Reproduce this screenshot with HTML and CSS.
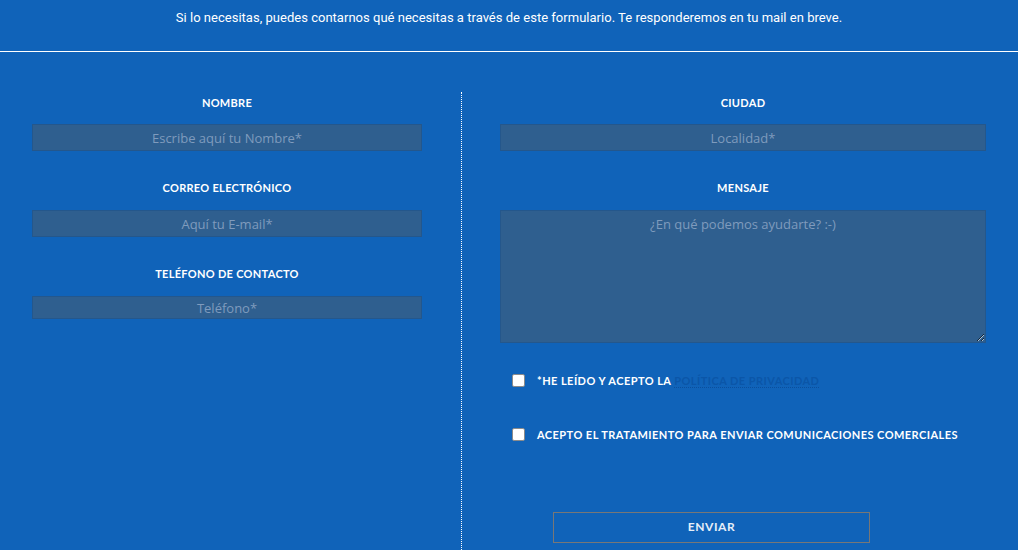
FILE: index.html
```html
<!DOCTYPE html>
<html lang="es">
<head>
<meta charset="utf-8">
<link rel="stylesheet" href="styles.css">
</head>
<body>
<header class="intro">
  <p>Si lo necesitas, puedes contarnos qué necesitas a través de este formulario. Te responderemos en tu mail en breve.</p>
</header>
<form class="form">
  <div class="col col-left">
    <label class="label">NOMBRE</label>
    <input class="field" type="text" placeholder="Escribe aquí tu Nombre*">
    <label class="label">CORREO ELECTRÓNICO</label>
    <input class="field" type="text" placeholder="Aquí tu E-mail*">
    <label class="label">TELÉFONO DE CONTACTO</label>
    <input class="field field-short" type="text" placeholder="Teléfono*">
  </div>
  <div class="col col-right">
    <label class="label">CIUDAD</label>
    <input class="field" type="text" placeholder="Localidad*">
    <label class="label">MENSAJE</label>
    <textarea class="field area" placeholder="¿En qué podemos ayudarte? :-)"></textarea>
    <div class="check check-first">
      <span class="box"></span>
      <span class="check-text">*HE LEÍDO Y ACEPTO LA <a class="link">POLÍTICA DE PRIVACIDAD</a></span>
    </div>
    <div class="check check-second">
      <span class="box"></span>
      <span class="check-text">ACEPTO EL TRATAMIENTO PARA ENVIAR COMUNICACIONES COMERCIALES</span>
    </div>
    <div class="submit-row">
      <button class="submit" type="button">ENVIAR</button>
    </div>
  </div>
</form>
</body>
</html>
```

FILE: styles.css
```css
html, body {
  margin: 0;
  padding: 0;
  background: #1063b9;
  height: 550px;
  overflow: hidden;
}
body {
  font-family: Roboto, "Liberation Sans", sans-serif;
  color: #fff;
}
.intro {
  height: 51px;
  border-bottom: 1px solid #ffffff;
  display: flex;
  justify-content: center;
}
.intro p {
  margin: 9px 0 0;
  font-size: 13px;
  line-height: 17px;
  letter-spacing: 0.02px;
}
.form {
  display: flex;
  padding-top: 40px;
}
.col {
  display: flex;
  flex-direction: column;
  padding-top: 4px;
  height: 454px;
}
.col-left {
  width: 390px;
  padding-left: 32px;
  padding-right: 39px;
  border-right: 1px dotted #ffffff;
}
.col-right {
  width: 486px;
  padding-left: 38px;
}
.label {
  display: block;
  text-align: center;
  font-family: Lato, "Open Sans", sans-serif;
  font-weight: 700;
  font-size: 11px;
  line-height: 14px;
  letter-spacing: 0.3px;
  margin-bottom: 15px;
}
.label:first-child {
  margin-bottom: 14px;
}
.field {
  box-sizing: border-box;
  width: 100%;
  height: 27px;
  margin: 0 0 30px;
  background: #2f5f8f;
  border: 1px solid #24578c;
  color: #fff;
  font-family: "Open Sans", sans-serif;
  font-size: 13px;
  text-align: center;
  padding: 0 8px;
  outline: none;
}
.field::placeholder {
  color: #7f9bbd;
}
.field-short {
  height: 23px;
}
.area {
  height: 133px;
  padding-top: 4px;
  resize: vertical;
  margin-bottom: 0;
}
.check {
  display: flex;
  align-items: center;
  padding-left: 12px;
  height: 14px;
}
.check-first { margin-top: 30px; }
.check-second { margin-top: 40px; }
.box {
  width: 11px;
  height: 11px;
  background: #fff;
  border: 1px solid #8b8b8b;
  border-radius: 2px;
  flex: none;
}
.check-text {
  margin-left: 12px;
  font-family: Lato, "Open Sans", sans-serif;
  font-weight: 700;
  font-size: 11px;
  letter-spacing: 0.45px;
  white-space: nowrap;
}
.link {
  color: #0b56a8;
  border-bottom: 1px dotted #0b4f9c;
  text-decoration: none;
}
.submit-row {
  margin-top: 71px;
  display: flex;
  padding-left: 53px;
}
.submit {
  width: 317px;
  height: 31px;
  background: transparent;
  border: 1px solid #777777;
  color: #e6eef8;
  font-family: Lato, "Open Sans", sans-serif;
  font-weight: 700;
  font-size: 12px;
  letter-spacing: 0.6px;
  padding: 0 0 2px;
}
```
